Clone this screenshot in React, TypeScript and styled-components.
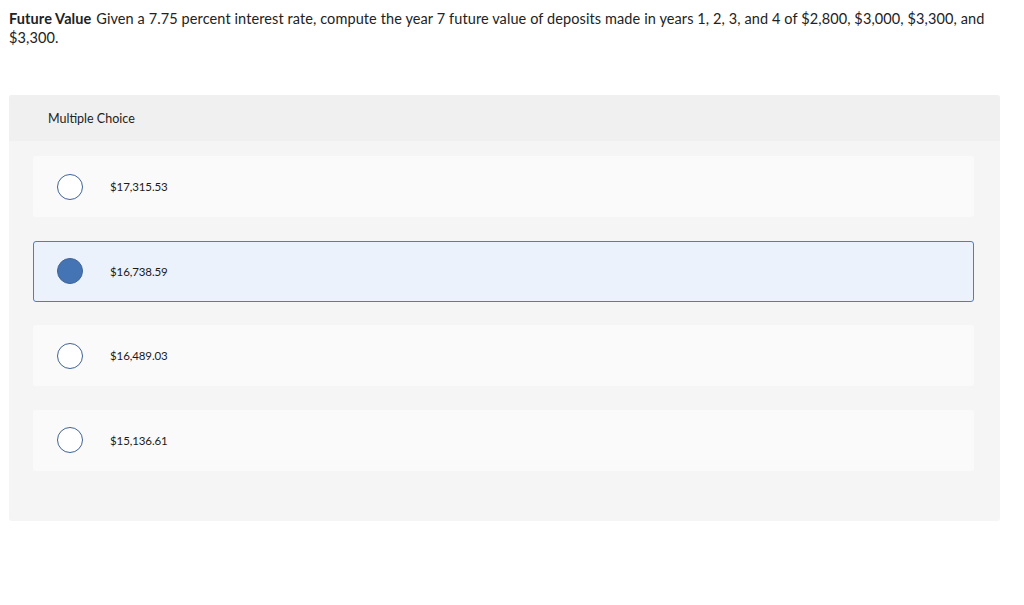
import React from "react";
import styled, { createGlobalStyle } from "styled-components";

const Global = createGlobalStyle`
  html, body { margin: 0; padding: 0; background: #ffffff; }
  body { font-family: Lato, "Open Sans", sans-serif; color: #1a1a1a; }
`;

const Page = styled.div`
  padding: 9px 15px 0 9px;
  width: 1024px;
  box-sizing: border-box;
`;

const Question = styled.p`
  margin: 0;
  font-size: 14.5px;
  letter-spacing: 0.1px;
  line-height: 19px;
  color: #222;
`;

const Bold = styled.strong`
  font-weight: 700;
  margin-right: 1px;
`;

const Panel = styled.div`
  margin-top: 48px;
  width: 991px;
  background: #f5f5f5;
  border-radius: 3px;
  overflow: hidden;
  padding-bottom: 50px;
`;

const Header = styled.div`
  height: 46px;
  background: #f0f0f0;
  display: flex;
  align-items: center;
  padding-left: 39px;
  font-size: 12.5px;
  color: #222;
`;

const List = styled.div`
  display: flex;
  flex-direction: column;
  gap: 23.5px;
  padding: 15px 26px 0 24px;
`;

const Option = styled.div<{ $selected?: boolean }>`
  height: 61px;
  box-sizing: border-box;
  display: flex;
  align-items: center;
  padding-left: 23px;
  border-radius: 3px;
  background: ${(p) => (p.$selected ? "#ebf2fb" : "#fafafa")};
  border: 1px solid ${(p) => (p.$selected ? "#4a7fc8" : "transparent")};
`;

const Radio = styled.span<{ $selected?: boolean }>`
  width: 26px;
  height: 26px;
  box-sizing: border-box;
  border-radius: 50%;
  border: 1px solid #3f6396;
  background: ${(p) => (p.$selected ? "#4574b4" : "#ffffff")};
  flex: none;
`;

const Label = styled.span`
  margin-left: 27px;
  font-size: 11.5px;
  letter-spacing: -0.1px;
  color: #1a1a1a;
`;

const options = ["$17,315.53", "$16,738.59", "$16,489.03", "$15,136.61"];

export default function App() {
  return (
    <>
      <Global />
      <Page>
        <Question>
          <Bold>Future Value</Bold> Given a 7.75 percent interest rate, compute the year 7 future value of deposits made in years 1, 2, 3, and 4 of $2,800, $3,000, $3,300, and $3,300.
        </Question>
        <Panel>
          <Header>Multiple Choice</Header>
          <List>
            {options.map((o, i) => (
              <Option key={o} $selected={i === 1}>
                <Radio $selected={i === 1} />
                <Label>{o}</Label>
              </Option>
            ))}
          </List>
        </Panel>
      </Page>
    </>
  );
}
